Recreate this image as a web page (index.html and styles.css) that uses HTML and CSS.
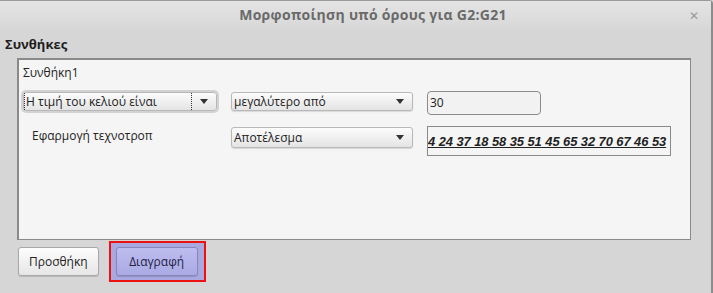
FILE: index.html
```html
<!DOCTYPE html>
<html lang="el">
<head>
    <meta charset="UTF-8">
    <title>Μορφοποίηση υπό όρους</title>
    <link rel="stylesheet" href="styles.css">
</head>
<body>
    <div class="dialog">
        <div class="titlebar">
            <span class="title">Μορφοποίηση υπό όρους για G2:G21</span>
            <span class="close">&#x2715;</span>
        </div>

        <div class="section-title">Συνθήκες</div>

        <div class="conditions">
            <div class="cond-name">Συνθήκη1</div>
            <div class="cond-grid">
                <div class="select select-focus">
                    <span class="select-text">Η τιμή του κελιού είναι</span>
                    <span class="arrow"></span>
                </div>
                <div class="select">
                    <span class="select-text">μεγαλύτερο από</span>
                    <span class="arrow"></span>
                </div>
                <div class="value-input">30</div>

                <div class="style-label">Εφαρμογή τεχνοτροπ</div>
                <div class="select select-tall">
                    <span class="select-text">Αποτέλεσμα</span>
                    <span class="arrow"></span>
                </div>
                <div class="preview"><span>4 24 37 18 58 35 51 45 65 32 70 67 46 53</span></div>
            </div>
        </div>

        <div class="buttons">
            <button class="btn">Προσθήκη</button>
            <div class="highlight">
                <button class="btn btn-active">Διαγραφή</button>
            </div>
        </div>
    </div>
</body>
</html>
```

FILE: styles.css
```css
html, body {
    margin: 0;
    padding: 0;
}
body {
    width: 713px;
    height: 293px;
    overflow: hidden;
    background-color: #d6d6d6;
    font-family: "Open Sans", "DejaVu Sans", sans-serif;
    font-size: 12px;
    color: #222;
}
.dialog {
    box-sizing: border-box;
    width: 713px;
    height: 293px;
    border-top: 1px solid #9a9a9a;
    border-right: 2px solid #8c8c8c;
    border-top-right-radius: 4px;
    background-color: #d6d6d6;
}
.titlebar {
    height: 27px;
    display: flex;
    align-items: center;
    justify-content: center;
    position: relative;
    background: linear-gradient(#e4e4e4, #d8d8d8);
}
.title {
    font-weight: bold;
    font-size: 14px;
    color: #6a6a6a;
    margin-left: 35px;
    letter-spacing: 0.3px;
}
.close {
    position: absolute;
    right: 12px;
    top: 6px;
    font-size: 12px;
    font-weight: bold;
    color: #9a9a9a;
}
.section-title {
    font-weight: bold;
    font-size: 13px;
    color: #1e1e1e;
    padding: 7px 0 0 5px;
    height: 23px;
}
.conditions {
    box-sizing: border-box;
    margin-left: 17px;
    width: 674px;
    height: 182px;
    border: 1px solid #8a8a8a;
    border-top-width: 2px;
    border-left-width: 2px;
    background-color: #f5f5f5;
    padding: 3px 0 0 4px;
}
.cond-name {
    height: 24px;
    line-height: 20px;
}
.cond-grid {
    display: grid;
    grid-template-columns: 194px 182px 244px;
    column-gap: 14px;
    row-gap: 11px;
    align-items: start;
    margin-top: 4px;
}
.select {
    box-sizing: border-box;
    height: 19px;
    margin-top: 1px;
    display: flex;
    align-items: center;
    border: 1px solid #b8b8b8;
    border-radius: 3px;
    background: linear-gradient(#fcfcfc, #e4e4e4);
    box-shadow: 0 1px 1px rgba(0,0,0,0.12);
    padding-left: 2px;
    position: relative;
}
.select-tall {
    height: 21px;
}
.select-focus {
    outline: 2px solid #d2d2d2;
}
.select-focus .select-text {
    border-left: 1px dotted #333;
    border-right: 1px dotted #333;
    margin-left: -2px;
    padding-left: 1px;
    width: 165px;
    flex: none;
}
.select-text {
    flex: 1;
    line-height: 17px;
    white-space: nowrap;
    overflow: hidden;
}
.arrow {
    width: 24px;
    display: flex;
    justify-content: center;
}
.arrow::after {
    content: "";
    border-left: 4px solid transparent;
    border-right: 4px solid transparent;
    border-top: 5px solid #333;
}
.value-input {
    box-sizing: border-box;
    width: 114px;
    height: 24px;
    line-height: 22px;
    border: 1px solid #8a8a8a;
    border-radius: 4px;
    background-color: #f2f2f2;
    padding-left: 2px;
    font-size: 12px;
}
.style-label {
    padding-left: 9px;
    line-height: 18px;
    margin-top: 1px;
}
.preview {
    box-sizing: border-box;
    height: 30px;
    border: 1px solid #8a8a8a;
    background-color: #f5f5f5;
    overflow: hidden;
    white-space: nowrap;
    display: flex;
    align-items: center;
}
.preview span {
    font-family: "Liberation Sans", Arial, sans-serif;
    font-weight: bold;
    font-style: italic;
    font-size: 12.9px;
    letter-spacing: -0.05px;
    text-decoration: underline;
    color: #222;
}
.buttons {
    display: flex;
    align-items: center;
    gap: 10px;
    padding: 1px 0 0 18px;
}
.btn {
    font-family: "Open Sans", "DejaVu Sans", sans-serif;
    font-size: 12px;
    color: #222;
    height: 29px;
    border: 1px solid #a8a8a8;
    border-radius: 3px;
    background: linear-gradient(#fdfdfd, #e6e6e6);
    box-shadow: 0 1px 1px rgba(0,0,0,0.15);
    padding: 0 10px;
}
.highlight {
    box-sizing: border-box;
    border: 2px solid #ee1111;
    background-color: #a9a9e2;
    padding: 4px 6px 4px 5px;
}
.btn-active {
    width: 82px;
    background: linear-gradient(#bdbdf0, #aaaae4);
    border-color: #8686bc;
    color: #222244;
}
```
